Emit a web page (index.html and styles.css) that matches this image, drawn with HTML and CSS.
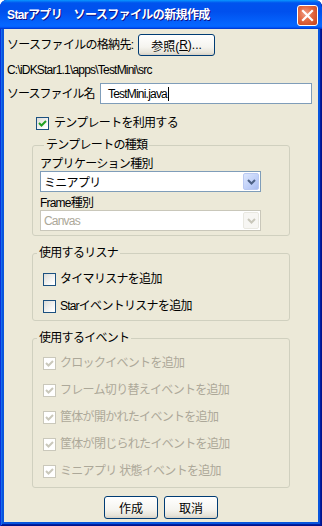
FILE: index.html
```html
<!DOCTYPE html>
<html lang="ja">
<head>
    <meta charset="UTF-8">
    <title>Starアプリ ソースファイルの新規作成</title>
    <link rel="stylesheet" href="styles.css">
</head>
<body>
    <!-- BEGIN::window -->
    <div class="window">
        <div class="titlebar">
            <span class="title">Starアプリ　ソースファイルの新規作成</span>
            <span class="close">
                <svg width="13" height="13" viewBox="0 0 13 13">
                    <path d="M2 2 L11 11 M11 2 L2 11" stroke="#fff" stroke-width="2.2" stroke-linecap="square"/>
                </svg>
            </span>
        </div>

        <div class="body">
            <div class="row row-dir">
                <span class="lbl lbl-dir">ソースファイルの格納先:</span>
                <span class="btn btn-browse">参照(<u>R</u>)...</span>
            </div>
            <div class="path latin">C:\iDKStar1.1\apps\TestMini\src</div>
            <div class="row row-name">
                <span class="lbl lbl-name">ソースファイル名</span>
                <div class="textbox latin">TestMini.java<span class="caret"></span></div>
            </div>

            <div class="check check-tpl"><span class="box on"></span>テンプレートを利用する</div>

            <!-- BEGIN::template group -->
            <fieldset class="group group-tpl">
                <legend>テンプレートの種類</legend>
                <div class="field-lbl lbl-app">アプリケーション種別</div>
                <div class="combo">
                    <span class="combo-text">ミニアプリ</span>
                    <span class="combo-btn">
                        <svg width="9" height="6" viewBox="0 0 9 6"><path d="M1 1 L4.5 4.5 L8 1" fill="none" stroke="#4d6185" stroke-width="2"/></svg>
                    </span>
                </div>
                <div class="field-lbl lbl-frame"><span class="latin">Frame</span>種別</div>
                <div class="combo disabled">
                    <span class="combo-text latin">Canvas</span>
                    <span class="combo-btn">
                        <svg width="9" height="6" viewBox="0 0 9 6"><path d="M1 1 L4.5 4.5 L8 1" fill="none" stroke="#c9c7ba" stroke-width="2"/></svg>
                    </span>
                </div>
            </fieldset>
            <!-- END::template group -->

            <!-- BEGIN::listener group -->
            <fieldset class="group group-listener">
                <legend>使用するリスナ</legend>
                <div class="check"><span class="box"></span>タイマリスナを追加</div>
                <div class="check"><span class="box"></span><span class="latin">Star</span>イベントリスナを追加</div>
            </fieldset>
            <!-- END::listener group -->

            <!-- BEGIN::event group -->
            <fieldset class="group group-event">
                <legend>使用するイベント</legend>
                <div class="check disabled"><span class="box on"></span>クロックイベントを追加</div>
                <div class="check disabled"><span class="box on"></span>フレーム切り替えイベントを追加</div>
                <div class="check disabled"><span class="box on"></span>筐体が開かれたイベントを追加</div>
                <div class="check disabled"><span class="box on"></span>筐体が閉じられたイベントを追加</div>
                <div class="check disabled"><span class="box on"></span>ミニアプリ 状態イベントを追加</div>
            </fieldset>
            <!-- END::event group -->

            <div class="actions">
                <span class="btn btn-ok">作成</span>
                <span class="btn btn-cancel">取消</span>
            </div>
        </div>
    </div>
    <!-- END::window -->
</body>
</html>
```

FILE: styles.css
```css
*{
    margin: 0;
    padding: 0;
    box-sizing: border-box;
}

body{
    font-family: 'Liberation Sans', 'Noto Sans CJK JP', sans-serif;
    font-size: 12px;
    letter-spacing: -0.7px;
    color: #000;
    background: #fff;
}

.latin{
    letter-spacing: -0.8px;
}

.window{
    width: 322px;
    height: 526px;
    display: flex;
    flex-direction: column;
    background: #0855dd;
    border-radius: 7px 7px 0 0;
    box-shadow: inset 1px 0 #0831d9, inset -1px -1px #00138c, inset 2px 0 #166aee, inset -2px -2px #001ea0;
    overflow: hidden;
}

.titlebar{
    height: 29px;
    flex: none;
    display: flex;
    align-items: center;
    justify-content: space-between;
    padding: 0 4px 0 7px;
    background: linear-gradient(180deg, #0997ff, #0053ee 10%, #0050ee 40%, #0566ff 85%, #0566ff 90%, #005bff 94%, #003dd7 97%, #003dd7);
    border-radius: 7px 7px 0 0;
}

.title{
    color: #fff;
    font-weight: bold;
    letter-spacing: -0.6px;
    text-shadow: 1px 1px #0f1089;
    line-height: 14px;
    padding-top: 1px;
}

.close{
    width: 21px;
    height: 21px;
    margin-top: 1px;
    display: flex;
    align-items: center;
    justify-content: center;
    border: 1px solid #fff;
    border-radius: 3px;
    background: radial-gradient(circle at 40% 40%, #f0a08a, #e2673f 45%, #c4401b 100%);
}

.body{
    flex: 1;
    margin: 0 4px 4px;
    padding: 0 3px;
    background: #ece9d8;
}

.row{
    display: flex;
    align-items: center;
}

.lbl{
    line-height: 14px;
    flex: none;
}

.row-dir{
    margin-top: 5px;
}

.lbl-dir{
    width: 131px;
}

.btn{
    display: flex;
    align-items: center;
    justify-content: center;
    height: 22px;
    border: 1px solid #003c74;
    border-radius: 3px;
    background: linear-gradient(180deg, #fff, #f5f4ef 60%, #e6e3d8 88%, #d6d0c5);
    letter-spacing: 0;
}

.btn-browse{
    width: 77px;
}

.path{
    margin-top: 7px;
    line-height: 14px;
}

.row-name{
    margin-top: 6px;
}

.lbl-name{
    width: 93px;
    letter-spacing: -1px;
}

.textbox{
    width: 212px;
    height: 21px;
    display: flex;
    align-items: center;
    padding-left: 7px;
    border: 1px solid #7f9db9;
    background: #fff;
}

.caret{
    width: 1px;
    height: 14px;
    margin-left: 1px;
    background: #000;
}

/* checkboxes */
.check{
    display: flex;
    align-items: center;
    height: 13px;
    line-height: 13px;
    margin-left: 10px;
}

.check + .check{
    margin-top: 14px;
}

.box{
    width: 13px;
    height: 13px;
    flex: none;
    margin-right: 4px;
    border: 1px solid #1c5180;
    background: linear-gradient(135deg, #dcdcd7, #fff 85%);
}

.box.on{
    background: url("data:image/svg+xml;utf8,<svg xmlns='http://www.w3.org/2000/svg' width='11' height='11'><path d='M2 5 L4.5 7.5 L9 3' fill='none' stroke='%2321a121' stroke-width='2'/></svg>") no-repeat center, linear-gradient(135deg, #dcdcd7, #fff 85%);
}

.check.disabled{
    color: #aca899;
}

.check.disabled .box{
    border-color: #cac8bb;
    background: url("data:image/svg+xml;utf8,<svg xmlns='http://www.w3.org/2000/svg' width='11' height='11'><path d='M2 5 L4.5 7.5 L9 3' fill='none' stroke='%23cac8bb' stroke-width='2'/></svg>") no-repeat center, #fff;
}

.check-tpl{
    margin-top: 13px;
    margin-left: 29px;
}

.check-tpl .box{
    margin-right: 5px;
}

/* group boxes */
.group{
    width: 258px;
    margin-left: 25px;
    border: 1px solid #d0d0bf;
    border-radius: 3px;
}

.group legend{
    margin-left: 4px;
    padding: 0 2px;
    line-height: 14px;
}

.group-tpl{
    margin-top: 8px;
    padding: 0 0 4px 7px;
}

.field-lbl{
    line-height: 13px;
}

.lbl-app{
    margin-top: 6px;
}

.lbl-frame{
    margin-top: 5px;
}

.combo{
    width: 221px;
    height: 21px;
    display: flex;
    align-items: center;
    justify-content: space-between;
    padding: 1px 1px 1px 3px;
    border: 1px solid #7f9db9;
    background: #fff;
}

.combo-btn{
    width: 16px;
    height: 17px;
    display: flex;
    align-items: center;
    justify-content: center;
    border: 1px solid #bac9f2;
    border-radius: 2px;
    background: linear-gradient(135deg, #dde7fd, #bfcff8 60%, #a8bcf0);
}

.combo.disabled{
    border-color: #c9c7ba;
    color: #aca899;
}

.combo.disabled .combo-btn{
    border-color: #e9e8e1;
    background: #f7f6f3;
}

.group-listener{
    margin-top: 10px;
    padding: 0 0 7px 0;
}

.group-listener .check:first-of-type{
    margin-top: 13px;
}

.group-event{
    margin-top: 10px;
    padding: 0 0 9px 0;
}

.group-event .check:first-of-type{
    margin-top: 12px;
}

.actions{
    display: flex;
    justify-content: center;
    gap: 6px;
    margin-top: 8px;
}

.btn-ok,
.btn-cancel{
    width: 54px;
    height: 23px;
}
```
